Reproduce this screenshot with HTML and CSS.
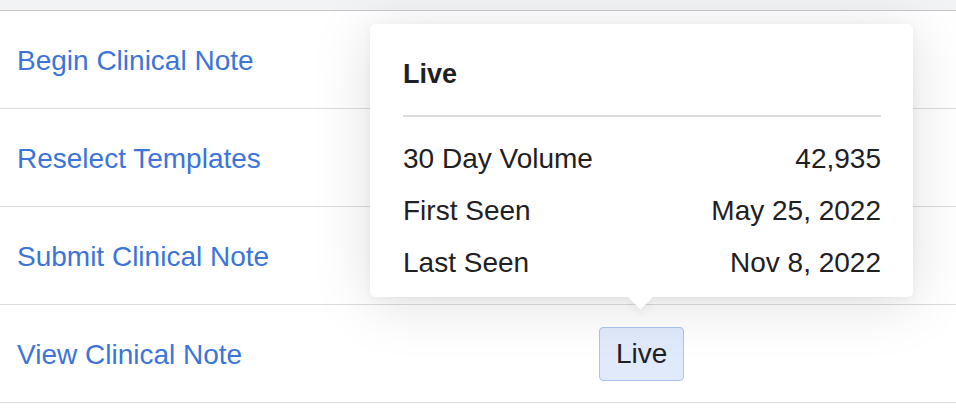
FILE: index.html
```html
<!DOCTYPE html>
<html>
<head>
<meta charset="utf-8">
<link rel="stylesheet" href="styles.css">
</head>
<body>
<div class="page">
  <div class="topbar"></div>
  <div class="row"><a class="link">Begin Clinical Note</a><div class="cell"></div></div>
  <div class="row"><a class="link">Reselect Templates</a><div class="cell"></div></div>
  <div class="row"><a class="link">Submit Clinical Note</a><div class="cell"></div></div>
  <div class="row"><a class="link">View Clinical Note</a><div class="cell"><span class="badge">Live</span></div></div>

  <div class="tooltip">
    <div class="tt-title">Live</div>
    <div class="tt-divider"></div>
    <div class="tt-row"><span>30 Day Volume</span><span>42,935</span></div>
    <div class="tt-row"><span>First Seen</span><span>May 25, 2022</span></div>
    <div class="tt-row"><span>Last Seen</span><span>Nov 8, 2022</span></div>
    <div class="tt-arrow"></div>
  </div>
</div>
</body>
</html>
```

FILE: styles.css
```css
html, body {
  margin: 0;
  padding: 0;
  background: #ffffff;
}
body {
  font-family: "Liberation Sans", Arial, sans-serif;
  color: #1f2023;
  width: 956px;
  height: 414px;
  overflow: hidden;
}
.page {
  position: relative;
  width: 956px;
  height: 414px;
}
.topbar {
  height: 10px;
  background: #f2f3f5;
  border-bottom: 1px solid #c6c6cb;
}
.row {
  display: grid;
  grid-template-columns: 582px auto;
  align-items: center;
  height: 97px;
  padding-left: 17px;
  border-bottom: 1px solid #dcdce0;
}
.link {
  color: #3c74da;
  font-size: 28px;
  text-decoration: none;
  padding-top: 2px;
}
.badge {
  display: inline-block;
  box-sizing: border-box;
  height: 54px;
  line-height: 52px;
  padding: 0 16px;
  font-size: 28px;
  color: #1f2023;
  background: #e1eafa;
  border: 1px solid #a9c4ef;
  border-radius: 4px;
}
.tooltip {
  position: absolute;
  left: 370px;
  top: 24px;
  width: 543px;
  height: 273px;
  box-sizing: border-box;
  padding: 24px 32px 8px 33px;
  background: #ffffff;
  border-radius: 5px;
  box-shadow: 0 6px 60px rgba(0, 0, 0, 0.13), 0 2px 8px rgba(0, 0, 0, 0.05);
}
.tt-title {
  font-size: 27px;
  font-weight: 600;
  line-height: 52px;
}
.tt-divider {
  height: 2px;
  background: #dcdce0;
  margin: 15px 0 16px 0;
}
.tt-row {
  display: flex;
  justify-content: space-between;
  font-size: 28px;
  line-height: 52px;
}
.tt-arrow {
  position: absolute;
  left: 262px;
  bottom: -9px;
  width: 17px;
  height: 17px;
  background: #ffffff;
  transform: rotate(45deg);
  box-shadow: 4px 4px 6px rgba(0, 0, 0, 0.04);
}
```
